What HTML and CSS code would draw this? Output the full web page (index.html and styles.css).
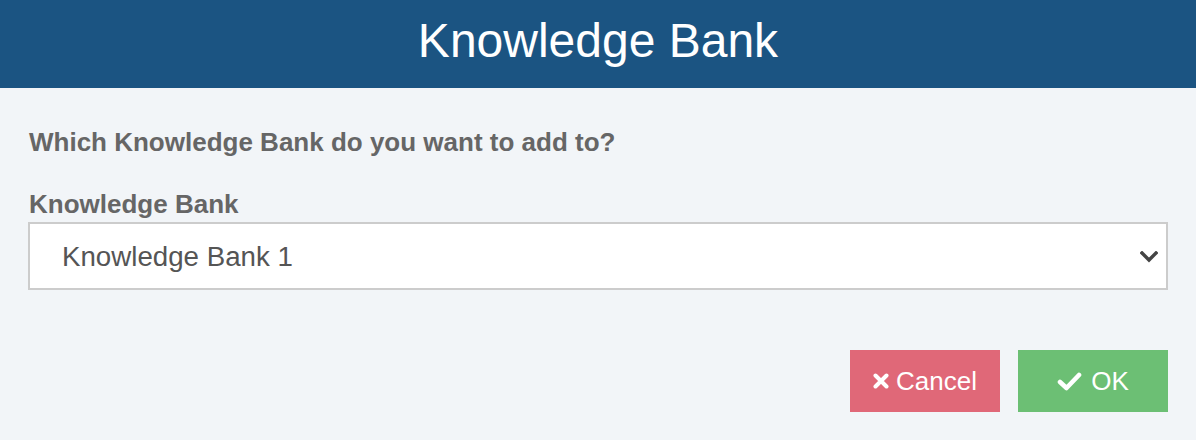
FILE: index.html
```html
<!DOCTYPE html>
<html lang="en">
<head>
    <meta charset="UTF-8">
    <meta name="viewport" content="width=device-width, initial-scale=1.0">
    <title>Knowledge Bank</title>
    <link rel="stylesheet" href="styles.css">
</head>
<body>
    <div class="modal">
        <header class="modal-header">
            <h1>Knowledge Bank</h1>
        </header>
        <div class="modal-body">
            <p class="question">Which Knowledge Bank do you want to add to?</p>
            <label class="field-label" for="bank">Knowledge Bank</label>
            <div class="select-wrap">
                <select id="bank" class="select">
                    <option>Knowledge Bank 1</option>
                    <option>Knowledge Bank 2</option>
                </select>
                <svg class="chevron" width="18" height="12" viewBox="0 0 18 12">
                    <path d="M2 2 L9 9 L16 2" fill="none" stroke="#444" stroke-width="3.4" stroke-linecap="square"/>
                </svg>
            </div>
        </div>
        <div class="modal-footer">
            <button type="button" class="btn btn-cancel">
                <svg width="16" height="16" viewBox="0 0 16 16">
                    <path d="M2.5 2.5 L13.5 13.5 M13.5 2.5 L2.5 13.5" stroke="#fff" stroke-width="4" stroke-linecap="round"/>
                </svg>
                Cancel
            </button>
            <button type="button" class="btn btn-ok">
                <svg width="25" height="19" viewBox="0 0 25 19">
                    <path d="M3 10 L9.5 16 L22 3" fill="none" stroke="#fff" stroke-width="4.6" stroke-linecap="round" stroke-linejoin="round"/>
                </svg>
                OK
            </button>
        </div>
    </div>
</body>
</html>
```

FILE: styles.css
```css
* {
    box-sizing: border-box;
    margin: 0;
    padding: 0;
}

body {
    font-family: "Liberation Sans", Arial, sans-serif;
    background-color: #f2f5f8;
    width: 1196px;
    height: 440px;
    overflow: hidden;
}

.modal-header {
    background-color: #1b5482;
    height: 88px;
    display: flex;
    align-items: center;
    justify-content: center;
}

.modal-header h1 {
    color: #ffffff;
    font-size: 48px;
    font-weight: 400;
    line-height: 1;
    padding-bottom: 6px;
}

.modal-body {
    padding: 39px 28px 0 28px;
}

.question {
    color: #666666;
    font-size: 26px;
    font-weight: 700;
    line-height: 30px;
    padding-left: 1px;
}

.field-label {
    display: block;
    color: #666666;
    font-size: 26px;
    font-weight: 700;
    line-height: 30px;
    margin-top: 32px;
    padding-left: 1px;
}

.select-wrap {
    position: relative;
    margin-top: 3px;
}

.select {
    appearance: none;
    -webkit-appearance: none;
    width: 100%;
    height: 68px;
    border: 2px solid #cccccc;
    border-radius: 0;
    background-color: #ffffff;
    color: #555555;
    font-family: inherit;
    font-size: 27.7px;
    padding: 0 32px;
    outline: none;
}

.chevron {
    position: absolute;
    right: 10px;
    top: 29px;
    pointer-events: none;
}

.modal-footer {
    display: flex;
    justify-content: flex-end;
    gap: 18px;
    padding: 60px 28px 0 28px;
}

.btn {
    width: 150px;
    height: 62px;
    border: none;
    border-radius: 0;
    color: #ffffff;
    font-family: inherit;
    font-size: 26px;
    display: flex;
    align-items: center;
    justify-content: center;
    gap: 7px;
    cursor: pointer;
}

.btn-cancel {
    background-color: #e06878;
}

.btn-ok {
    background-color: #6cbf74;
    gap: 9px;
}
```
